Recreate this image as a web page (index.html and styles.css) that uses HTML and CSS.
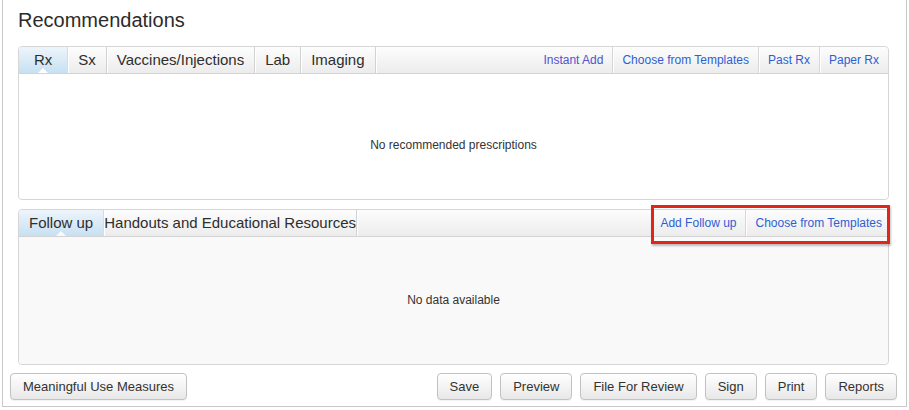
FILE: index.html
```html
<!DOCTYPE html>
<html>
<head>
<meta charset="utf-8">
<link rel="stylesheet" href="styles.css">
</head>
<body>
<div class="page">
  <div class="main">
    <h1 class="title">Recommendations</h1>

    <div class="panel">
      <div class="panel-head">
        <ul class="tabs">
          <li class="tab tab-first active">Rx</li>
          <li class="tab">Sx</li>
          <li class="tab">Vaccines/Injections</li>
          <li class="tab">Lab</li>
          <li class="tab">Imaging</li>
        </ul>
        <div class="links">
          <a class="link visited">Instant Add</a>
          <a class="link">Choose from Templates</a>
          <a class="link">Past Rx</a>
          <a class="link">Paper Rx</a>
        </div>
      </div>
      <div class="panel-body body-rx">No recommended prescriptions</div>
    </div>

    <div class="panel panel-follow">
      <div class="panel-head">
        <ul class="tabs">
          <li class="tab active active-grey">Follow up</li>
          <li class="tab tab-flush">Handouts and Educational Resources</li>
        </ul>
        <div class="links links-follow">
          <a class="link">Add Follow up</a>
          <a class="link">Choose from Templates</a>
        </div>
        <div class="highlight"></div>
      </div>
      <div class="panel-body body-follow">No data available</div>
    </div>
  </div>

  <div class="actions">
    <button class="btn">Meaningful Use Measures</button>
    <div class="actions-right">
      <button class="btn">Save</button>
      <button class="btn">Preview</button>
      <button class="btn">File For Review</button>
      <button class="btn">Sign</button>
      <button class="btn">Print</button>
      <button class="btn">Reports</button>
    </div>
  </div>
</div>
</body>
</html>
```

FILE: styles.css
```css
* { box-sizing: border-box; }

html, body {
  margin: 0;
  padding: 0;
  background: #ffffff;
}

body {
  font-family: "Liberation Sans", Arial, Helvetica, sans-serif;
  color: #333333;
}

.page {
  margin-left: 2px;
  width: 905px;
  height: 407px;
  border-left: 1px solid #c9c9c9;
  border-right: 1px solid #c9c9c9;
  border-bottom: 1px solid #c9c9c9;
  background: #ffffff;
  display: flex;
  flex-direction: column;
}

.main {
  padding: 0 17px 0 15px;
}

.title {
  margin: 8px 0 14px 0;
  font-size: 20px;
  line-height: 24px;
  font-weight: normal;
  color: #2b2b2b;
}

.panel {
  border: 1px solid #d6d6d6;
  border-radius: 4px;
  background: #ffffff;
}

.panel-follow {
  margin-top: 9px;
  position: relative;
}

.panel-head {
  display: flex;
  justify-content: space-between;
  height: 27px;
  border-bottom: 1px solid #d3d3d3;
  background: linear-gradient(#fdfdfd, #ececec);
  border-radius: 4px 4px 0 0;
}

.tabs {
  list-style: none;
  margin: 0;
  padding: 0;
  display: flex;
}

.tab {
  position: relative;
  padding: 0 10px;
  font-size: 15px;
  line-height: 26px;
  color: #2e2e2e;
  border-right: 1px solid #d2d2d2;
  box-shadow: 1px 0 0 #ffffff;
}

.tab-first {
  padding: 0 15px;
  border-top-left-radius: 4px;
}

.tab-flush {
  padding: 0;
}

.active {
  background: linear-gradient(#edf5fb, #c8e0f2);
  border-top-left-radius: 4px;
  border-right-color: #d2dde6;
}

.active::after {
  content: "";
  position: absolute;
  left: 50%;
  bottom: 0;
  margin-left: -5px;
  border-left: 5px solid transparent;
  border-right: 5px solid transparent;
  border-bottom: 5px solid #ffffff;
}

.active-grey::after {
  border-bottom-color: #f9f9f9;
}

.links {
  display: flex;
}

.link {
  padding: 0 9px;
  font-size: 12px;
  line-height: 26px;
  color: #2d5fd3;
  border-left: 1px solid #d7d7d7;
  box-shadow: inset 1px 0 0 #ffffff;
  cursor: pointer;
}

.link:first-child {
  border-left: none;
  box-shadow: none;
}

.visited {
  color: #4f53cf;
}

.links-follow .link:first-child {
  padding-left: 10px;
}

.links-follow .link:last-child {
  padding-right: 6px;
}

.highlight {
  position: absolute;
  left: 632px;
  top: -5px;
  width: 239px;
  height: 39px;
  border: 3px solid #e0261a;
  box-shadow: 1px 2px 2px rgba(0, 0, 0, 0.25);
  pointer-events: none;
}

.panel-body {
  font-size: 12px;
  line-height: 14px;
  text-align: center;
  color: #333333;
}

.body-rx {
  height: 125px;
  padding-top: 64px;
  background: #ffffff;
  border-radius: 0 0 4px 4px;
}

.body-follow {
  height: 127px;
  padding-top: 56px;
  background: #f9f9f9;
  border-radius: 0 0 4px 4px;
}

.actions {
  display: flex;
  justify-content: space-between;
  padding: 0 9px 0 7px;
  margin-top: 8px;
}

.actions-right {
  display: flex;
  gap: 8px;
}

.btn {
  height: 27px;
  padding: 0 12px;
  font-family: "Liberation Sans", Arial, Helvetica, sans-serif;
  font-size: 13px;
  color: #333333;
  background: linear-gradient(#ffffff, #e8e8e8);
  border: 1px solid #c2c2c2;
  border-radius: 4px;
  box-shadow: 0 1px 1px rgba(0, 0, 0, 0.06);
}
```
